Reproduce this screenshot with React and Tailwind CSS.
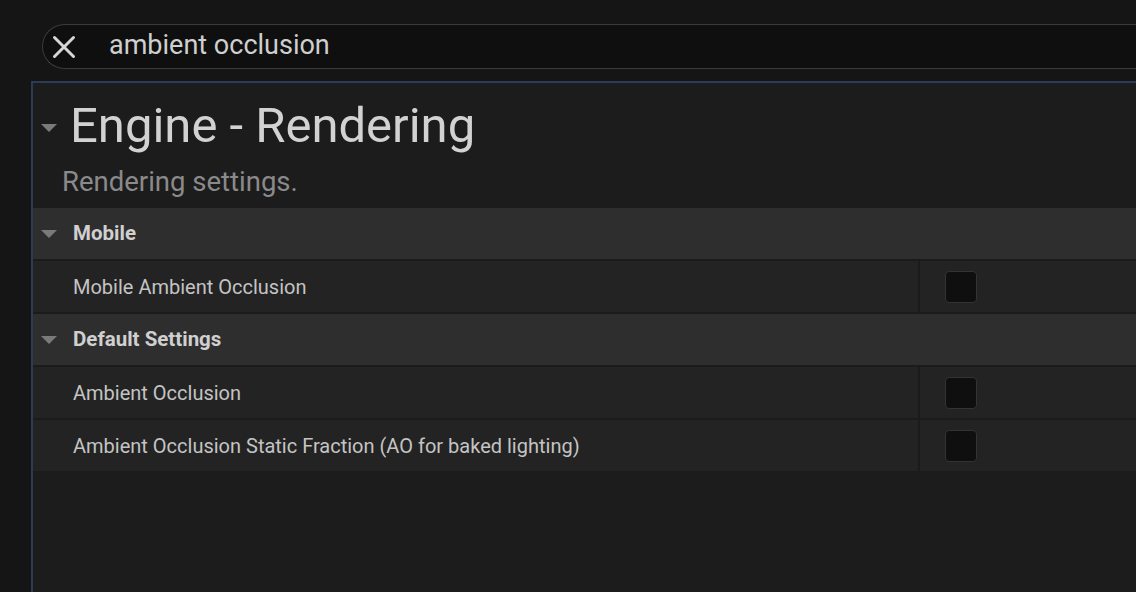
import React from 'react';

const sections = [
  {
    title: 'Mobile',
    rows: ['Mobile Ambient Occlusion'],
  },
  {
    title: 'Default Settings',
    rows: ['Ambient Occlusion', 'Ambient Occlusion Static Fraction (AO for baked lighting)'],
  },
];

function Caret({ className }) {
  return (
    <svg width="18" height="10" viewBox="0 0 18 10" className={className}>
      <path d="M1 1h16L9 9z" fill="#7a7a7a" />
    </svg>
  );
}

export default function App() {
  return (
    <div className="flex h-[592px] w-[1136px] flex-col overflow-hidden bg-[#151515] font-['Roboto',sans-serif]">
      <div className="ml-[42px] mt-[24px] flex h-[45px] items-center rounded-l-full border border-r-0 border-[#3b3b3b] bg-[#0f0f0f]">
        <svg width="24" height="24" viewBox="0 0 24 24" className="ml-[9px]">
          <path d="M2.5 2.5L21.5 21.5M21.5 2.5L2.5 21.5" stroke="#d6d6d6" strokeWidth="3" strokeLinecap="round" />
        </svg>
        <span className="mb-[3px] ml-[33px] text-[27px] leading-none text-[#cfcfcf]">ambient occlusion</span>
      </div>

      <div className="ml-[31px] mt-[12px] flex-1 border-l-2 border-t-2 border-[#2b3c58] bg-[#1c1c1c]">
        <div className="flex items-center pl-[7px] pt-[13px]">
          <Caret className="mt-[4px]" />
          <span className="ml-[12px] text-[49px] leading-[60px] text-[#d2d2d2]">Engine - Rendering</span>
        </div>
        <p className="ml-[29px] mt-[10px] text-[27.5px] leading-[32px] text-[#8a8a8a]">Rendering settings.</p>

        <div className="mt-[10px]">
          {sections.map((section) => (
            <div key={section.title}>
              <div className="flex h-[53px] items-center border-b-2 border-[#1b1b1b] bg-[#2e2e2e] pl-[7px]">
                <Caret />
                <span className="ml-[15px] text-[20.5px] font-bold text-[#d0d0d0]">{section.title}</span>
              </div>
              {section.rows.map((row) => (
                <div key={row} className="flex h-[53px] border-b-2 border-[#1b1b1b] bg-[#232323]">
                  <div className="flex w-[885px] items-center pl-[40px] text-[20px] text-[#c4c4c4]">{row}</div>
                  <div className="w-[2px] bg-[#1b1b1b]" />
                  <div className="flex flex-1 items-center pl-[25px]">
                    <div className="h-[32px] w-[32px] rounded-[4px] border border-[#333333] bg-[#0f0f0f]" />
                  </div>
                </div>
              ))}
            </div>
          ))}
        </div>
      </div>
    </div>
  );
}
